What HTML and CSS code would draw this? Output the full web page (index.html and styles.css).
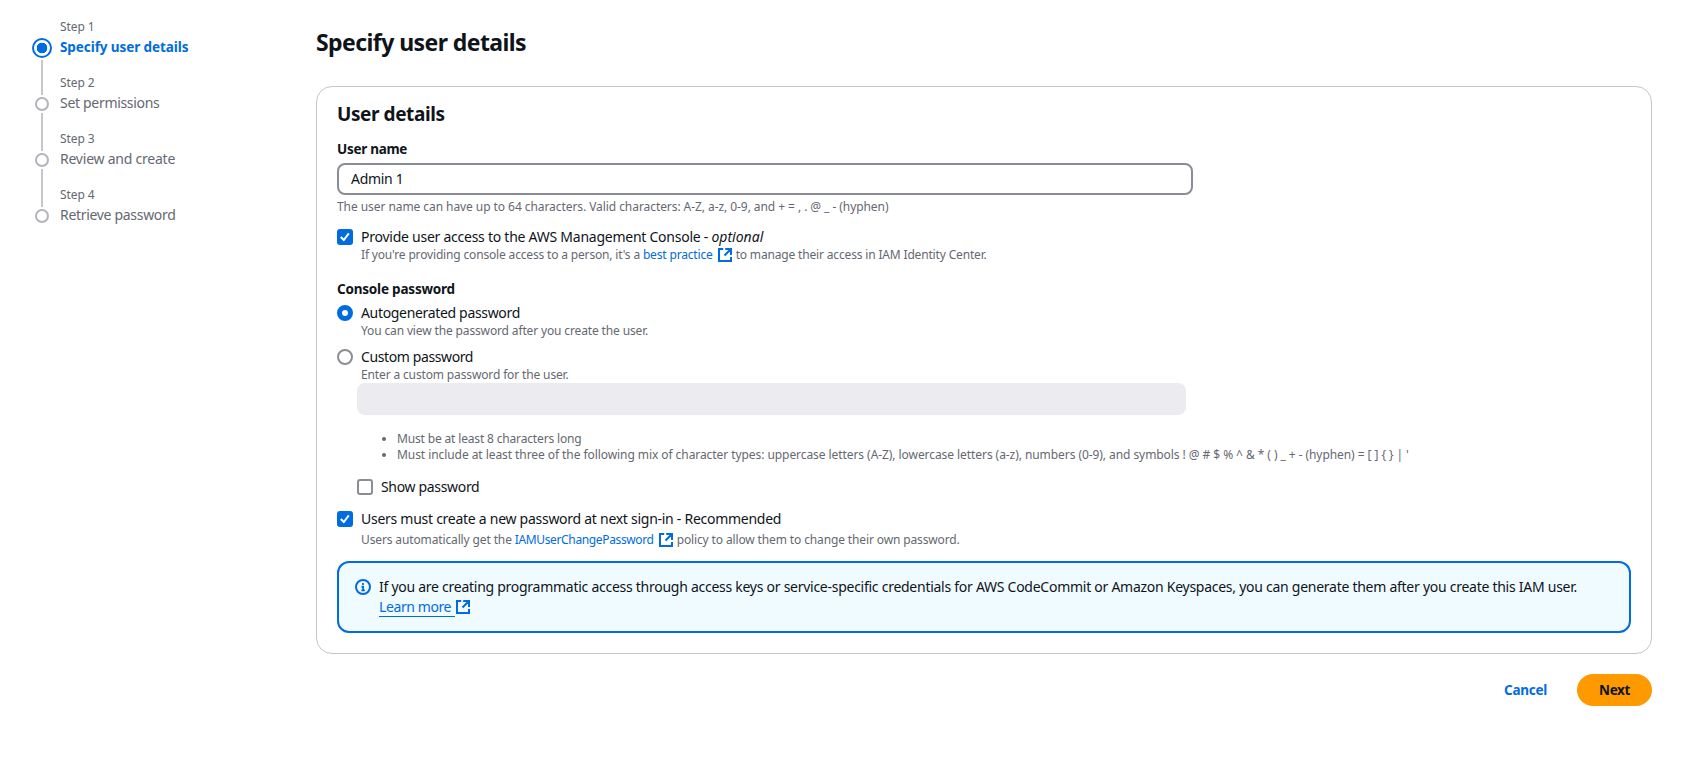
FILE: index.html
```html
<!DOCTYPE html>
<html lang="en">
<head>
<meta charset="utf-8">
<title>Specify user details</title>
<link rel="stylesheet" href="styles.css">
</head>
<body>
<svg class="defs" width="0" height="0" aria-hidden="true">
  <symbol id="external" viewBox="0 0 16 16">
    <path d="M6.200 2H2v12h12v-4M8.200 2H14v6M14 2 7.500 8.500" fill="none" stroke="currentColor" stroke-width="2"/>
  </symbol>
  <symbol id="check" viewBox="0 0 16 16">
    <path d="m3.800 8 3 3 5-6.600" fill="none" stroke="currentColor" stroke-width="2"/>
  </symbol>
</svg>
<div class="layout">
  <nav class="steps">
    <div class="step active"><div class="rail"><i class="dot"></i><i class="line"></i></div><div class="step-text"><span class="step-no">Step 1</span><span class="step-name">Specify user details</span></div></div>
    <div class="step"><div class="rail"><i class="dot"></i><i class="line"></i></div><div class="step-text"><span class="step-no">Step 2</span><span class="step-name">Set permissions</span></div></div>
    <div class="step"><div class="rail"><i class="dot"></i><i class="line"></i></div><div class="step-text"><span class="step-no">Step 3</span><span class="step-name review">Review and create</span></div></div>
    <div class="step"><div class="rail"><i class="dot"></i></div><div class="step-text"><span class="step-no">Step 4</span><span class="step-name">Retrieve password</span></div></div>
  </nav>
  <main class="main">
    <h1 class="title">Specify user details</h1>
    <section class="card">
      <h2 class="card-title">User details</h2>
      <div class="label">User name</div>
      <div class="input">Admin 1</div>
      <div class="hint name-hint">The user name can have up to 64 characters. Valid characters: A-Z, a-z, 0-9, and + = , . @ _ - (hyphen)</div>

      <div class="choice access">
        <span class="box checked"><svg class="icon"><use href="#check"/></svg></span>
        <div class="choice-text">
          <div class="text">Provide user access to the AWS Management Console - <em>optional</em></div>
          <div class="hint"><span>If you're providing console access to a person, it's a </span><a class="link">best practice</a><svg class="icon ext"><use href="#external"/></svg><span>to manage their access in IAM Identity Center.</span></div>
        </div>
      </div>

      <div class="label pw-label">Console password</div>
      <div class="choice auto">
        <span class="radio selected"></span>
        <div class="choice-text">
          <div class="text">Autogenerated password</div>
          <div class="hint">You can view the password after you create the user.</div>
        </div>
      </div>
      <div class="choice custom">
        <span class="radio"></span>
        <div class="choice-text">
          <div class="text">Custom password</div>
          <div class="hint">Enter a custom password for the user.</div>
        </div>
      </div>
      <div class="custom-body">
        <div class="input disabled"></div>
        <ul class="rules">
          <li class="length">Must be at least 8 characters long</li>
          <li class="mix">Must include at least three of the following mix of character types: uppercase letters (A-Z), lowercase letters (a-z), numbers (0-9), and symbols ! @ # $ % ^ &amp; * ( ) _ + - (hyphen) = [ ] { } | '</li>
        </ul>
        <div class="choice show">
          <span class="box"></span>
          <div class="choice-text"><div class="text">Show password</div></div>
        </div>
      </div>
      <div class="choice reset">
        <span class="box checked"><svg class="icon"><use href="#check"/></svg></span>
        <div class="choice-text">
          <div class="text">Users must create a new password at next sign-in - Recommended</div>
          <div class="hint"><span>Users automatically get the </span><a class="link policy">IAMUserChangePassword</a><svg class="icon ext"><use href="#external"/></svg><span>policy to allow them to change their own password.</span></div>
        </div>
      </div>

      <div class="alert">
        <svg class="icon info" viewBox="0 0 16 16"><circle cx="8" cy="8" r="7" fill="none" stroke="currentColor" stroke-width="2"/><path d="M8 4v2M6.500 7.750H8.100V11M6.300 11.300h3.600" fill="none" stroke="currentColor" stroke-width="1.800"/></svg>
        <div class="alert-text">
          <div class="text">If you are creating programmatic access through access keys or service-specific credentials for AWS CodeCommit or Amazon Keyspaces, you can generate them after you create this IAM user.</div>
          <div class="more"><a class="link underlined">Learn more</a><svg class="icon"><use href="#external"/></svg></div>
        </div>
      </div>
    </section>
    <div class="actions">
      <a class="cancel">Cancel</a>
      <button class="next">Next</button>
    </div>
  </main>
</div>
</body>
</html>
```
FILE: styles.css
```css
* { box-sizing: border-box; }
body {
  margin: 0;
  background: #fff;
  color: #0f141a;
  font: 14px/20px "Noto Sans", "Open Sans", sans-serif;
}
.defs { position: absolute; }
.layout { display: flex; padding: 17px 38px 0 32px; }
.icon { width: 16px; height: 16px; flex: none; display: block; }

/* Step navigation */
.steps { width: 284px; flex: none; color: #656871; }
.step { display: flex; gap: 8px; height: 56px; }
.rail { width: 20px; display: flex; flex-direction: column; align-items: center; padding-top: 24px; }
.dot { width: 14px; height: 14px; border: 2px solid #b4b4bb; border-radius: 50%; flex: none; }
.line { width: 2px; height: 38px; background: #c6c6cd; margin-top: 2px; flex: none; }
.active .rail { padding-top: 21px; }
.active .dot { width: 20px; height: 20px; border-color: #006ce0; background: radial-gradient(circle, #006ce0 5px, #fff 5.600px); }
.active .line { height: 35px; }
.step-text { display: flex; flex-direction: column; white-space: nowrap; }
.step-no { font-size: 12px; line-height: 20px; letter-spacing: -0.1px; }
.step-name { line-height: 20px; letter-spacing: -0.31px; }
.step-name.review { letter-spacing: -0.23px; }
.active .step-name { font-size: 13.5px; font-weight: 700; letter-spacing: -0.08px; color: #006ce0; }

/* Form */
.main { flex: 1; min-width: 0; }
.title { margin: 9px 0 28px; font-size: 23px; line-height: 32px; letter-spacing: -0.57px; }
.card { height: 568px; border: 1px solid #c6c6cd; border-radius: 16px; padding: 15px 20px 20px; white-space: nowrap; }
.card-title { margin: 0; font-size: 19px; line-height: 24px; letter-spacing: -0.42px; }
.label { font-size: 13.5px; font-weight: 700; margin-top: 13px; line-height: 20px; letter-spacing: -0.28px; }
.input { width: 856px; height: 32px; margin-top: 4px; padding: 4px 12px; border: 2px solid #8c8c94; border-radius: 8px; letter-spacing: -0.3px; }
.hint { display: flex; font-size: 12px; line-height: 16px; color: #656871; white-space: pre; letter-spacing: -0.14px; }
.name-hint { margin-top: 4px; letter-spacing: -0.067px; }
.link { color: #006ce0; }
.choice { display: flex; gap: 8px; }
.text { letter-spacing: -0.33px; }
.box, .radio { width: 16px; height: 16px; margin-top: 2px; border: 2px solid #8c8c94; flex: none; }
.box { border-radius: 3px; }
.box.checked { border: 0; background: #006ce0; color: #fff; }
.radio { border-radius: 50%; }
.radio.selected { border: 5px solid #006ce0; }
.access { margin-top: 12px; }
.access .text { letter-spacing: -0.25px; }
.access .text em { letter-spacing: 0; }
.access .hint { letter-spacing: -0.165px; }
.ext { margin: 0 3px 0 4px; color: #006ce0; }
.pw-label { margin-top: 16px; letter-spacing: -0.2px; }
.auto { margin-top: 4px; }
.custom { margin-top: 8px; }
.custom .text { letter-spacing: -0.39px; }
.custom-body { padding-left: 20px; }
.input.disabled { width: 829px; margin: 0; background: #ebebf0; border: 0; }
.rules { margin: 16px 0 14px; padding-left: 40px; font-size: 12px; line-height: 16px; color: #656871; }
.length { letter-spacing: -0.16px; }
.mix { letter-spacing: -0.068px; }
.reset { margin-top: 12px; }
.reset .text { letter-spacing: -0.27px; }
.reset .hint { margin-top: 3px; letter-spacing: -0.13px; }
.reset .policy { letter-spacing: -0.36px; }
.alert { display: flex; gap: 8px; height: 72px; margin-top: 13px; padding: 14px 16px; border: 2px solid #006ce0; border-radius: 12px; background: #f0fbff; }
.info { margin-top: 2px; color: #006ce0; }
.alert .text { letter-spacing: -0.265px; }
.more { display: flex; align-items: center; color: #006ce0; }
.underlined { border-bottom: 1px solid #006ce0; padding-right: 4px; line-height: 19px; letter-spacing: -0.4px; }

/* Footer actions */
.actions { display: flex; justify-content: flex-end; align-items: center; gap: 30px; margin-top: 20px; font-size: 13.5px; font-weight: 700; letter-spacing: -0.28px; }
.cancel { color: #006ce0; }
.next { width: 75px; height: 32px; padding: 0; border: 0; border-radius: 16px; background: #f90; color: #0f141a; font: inherit; letter-spacing: -0.4px; }
```
